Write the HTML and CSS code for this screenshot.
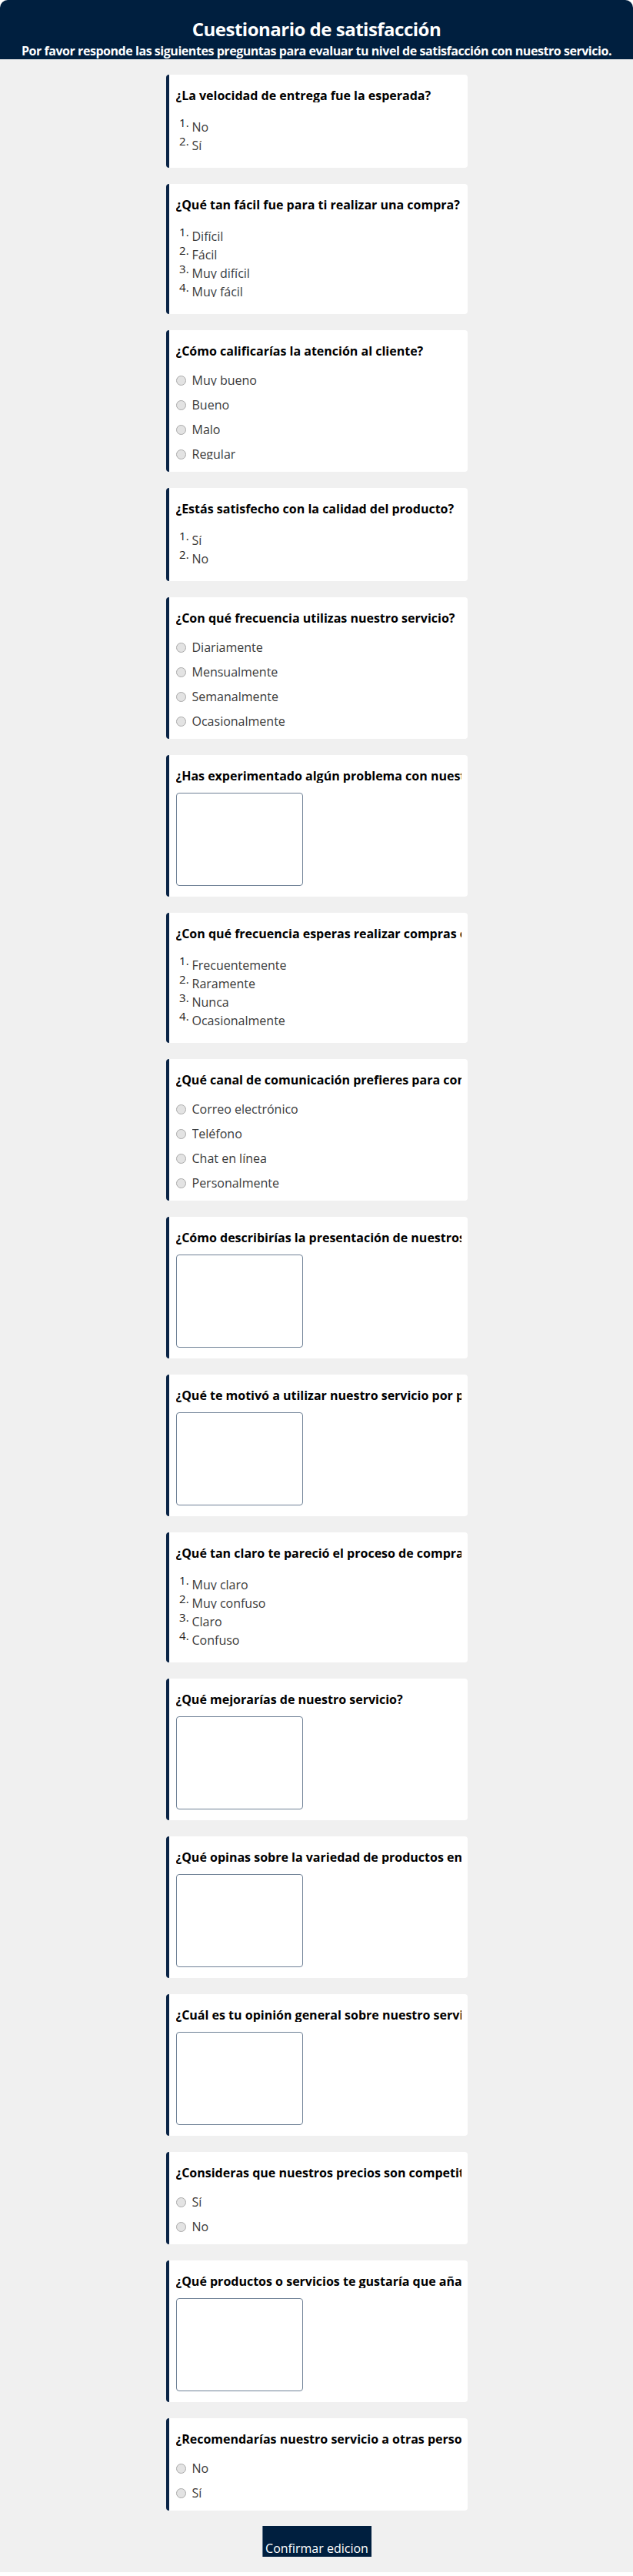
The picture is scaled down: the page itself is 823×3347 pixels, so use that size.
FILE: index.html
```html
<!DOCTYPE html>
<html lang="es">
<head>
<meta charset="utf-8">
<title>Cuestionario de satisfacción</title>
<link rel="stylesheet" href="styles.css">
</head>
<body>
<header class="page-header">
  <h1 class="page-title">Cuestionario de satisfacción</h1>
  <p class="page-subtitle">Por favor responde las siguientes preguntas para evaluar tu nivel de satisfacción con nuestro servicio.</p>
</header>
<main class="survey">
  <div class="cards">
    <section class="card">
      <h2 class="q-title">¿La velocidad de entrega fue la esperada?</h2>
      <ol class="opts-num"><li><span class="opt">No</span></li><li><span class="opt">Sí</span></li></ol>
    </section>
    <section class="card">
      <h2 class="q-title">¿Qué tan fácil fue para ti realizar una compra?</h2>
      <ol class="opts-num"><li><span class="opt">Difícil</span></li><li><span class="opt">Fácil</span></li><li><span class="opt">Muy difícil</span></li><li><span class="opt">Muy fácil</span></li></ol>
    </section>
    <section class="card">
      <h2 class="q-title">¿Cómo calificarías la atención al cliente?</h2>
      <div class="opts-radio">
        <label class="radio-row"><input type="radio" name="q3"><span class="lbl">Muy bueno</span></label>
        <label class="radio-row"><input type="radio" name="q3"><span class="lbl">Bueno</span></label>
        <label class="radio-row"><input type="radio" name="q3"><span class="lbl">Malo</span></label>
        <label class="radio-row"><input type="radio" name="q3"><span class="lbl">Regular</span></label>
      </div>
    </section>
    <section class="card">
      <h2 class="q-title">¿Estás satisfecho con la calidad del producto?</h2>
      <ol class="opts-num"><li><span class="opt">Sí</span></li><li><span class="opt">No</span></li></ol>
    </section>
    <section class="card">
      <h2 class="q-title">¿Con qué frecuencia utilizas nuestro servicio?</h2>
      <div class="opts-radio">
        <label class="radio-row"><input type="radio" name="q5"><span class="lbl">Diariamente</span></label>
        <label class="radio-row"><input type="radio" name="q5"><span class="lbl">Mensualmente</span></label>
        <label class="radio-row"><input type="radio" name="q5"><span class="lbl">Semanalmente</span></label>
        <label class="radio-row"><input type="radio" name="q5"><span class="lbl">Ocasionalmente</span></label>
      </div>
    </section>
    <section class="card">
      <h2 class="q-title">¿Has experimentado algún problema con nuestro servicio?</h2>
      <textarea class="answer"></textarea>
    </section>
    <section class="card">
      <h2 class="q-title">¿Con qué frecuencia esperas realizar compras en el futuro?</h2>
      <ol class="opts-num"><li><span class="opt">Frecuentemente</span></li><li><span class="opt">Raramente</span></li><li><span class="opt">Nunca</span></li><li><span class="opt">Ocasionalmente</span></li></ol>
    </section>
    <section class="card">
      <h2 class="q-title">¿Qué canal de comunicación prefieres para comunicarte con nosotros?</h2>
      <div class="opts-radio">
        <label class="radio-row"><input type="radio" name="q8"><span class="lbl">Correo electrónico</span></label>
        <label class="radio-row"><input type="radio" name="q8"><span class="lbl">Teléfono</span></label>
        <label class="radio-row"><input type="radio" name="q8"><span class="lbl">Chat en línea</span></label>
        <label class="radio-row"><input type="radio" name="q8"><span class="lbl">Personalmente</span></label>
      </div>
    </section>
    <section class="card">
      <h2 class="q-title">¿Cómo describirías la presentación de nuestros productos?</h2>
      <textarea class="answer"></textarea>
    </section>
    <section class="card">
      <h2 class="q-title">¿Qué te motivó a utilizar nuestro servicio por primera vez?</h2>
      <textarea class="answer"></textarea>
    </section>
    <section class="card">
      <h2 class="q-title">¿Qué tan claro te pareció el proceso de compra?</h2>
      <ol class="opts-num"><li><span class="opt">Muy claro</span></li><li><span class="opt">Muy confuso</span></li><li><span class="opt">Claro</span></li><li><span class="opt">Confuso</span></li></ol>
    </section>
    <section class="card">
      <h2 class="q-title">¿Qué mejorarías de nuestro servicio?</h2>
      <textarea class="answer"></textarea>
    </section>
    <section class="card">
      <h2 class="q-title">¿Qué opinas sobre la variedad de productos en nuestra tienda?</h2>
      <textarea class="answer"></textarea>
    </section>
    <section class="card">
      <h2 class="q-title">¿Cuál es tu opinión general sobre nuestro servicio?</h2>
      <textarea class="answer"></textarea>
    </section>
    <section class="card">
      <h2 class="q-title">¿Consideras que nuestros precios son competitivos?</h2>
      <div class="opts-radio">
        <label class="radio-row"><input type="radio" name="q15"><span class="lbl">Sí</span></label>
        <label class="radio-row"><input type="radio" name="q15"><span class="lbl">No</span></label>
      </div>
    </section>
    <section class="card">
      <h2 class="q-title">¿Qué productos o servicios te gustaría que añadiéramos?</h2>
      <textarea class="answer"></textarea>
    </section>
    <section class="card">
      <h2 class="q-title">¿Recomendarías nuestro servicio a otras personas?</h2>
      <div class="opts-radio">
        <label class="radio-row"><input type="radio" name="q17"><span class="lbl">No</span></label>
        <label class="radio-row"><input type="radio" name="q17"><span class="lbl">Sí</span></label>
      </div>
    </section>
  </div>
  <div class="actions">
    <button class="submit" type="button">Confirmar edicion</button>
  </div>
</main>
</body>
</html>
```

FILE: styles.css
```css
* {
  box-sizing: border-box;
}

html,
body {
  margin: 0;
  padding: 0;
}

body {
  background: #ffffff;
  font-family: "Open Sans", "Noto Sans", sans-serif;
  color: #000;
}

.page-header {
  height: 77px;
  background: #001f3f;
  color: #fff;
  border-radius: 10px 10px 0 0;
  text-align: center;
  padding-top: 24px;
  overflow: hidden;
}

.page-title {
  margin: 0;
  font-size: 24px;
  line-height: 28px;
  font-weight: 700;
  letter-spacing: -0.5px;
}

.page-subtitle {
  margin: 4px 0 0;
  font-size: 16px;
  line-height: 20px;
  font-weight: 700;
  white-space: nowrap;
  letter-spacing: -0.45px;
}

.survey {
  background: #f0f0f0;
  padding: 20px 0 20px;
}

.cards {
  display: flex;
  flex-direction: column;
  align-items: center;
  gap: 21px;
}

.card {
  width: 392px;
  background: #fff;
  border-left: 4px solid #0a2446;
  border-radius: 4px;
  padding: 17px 8px 0 9px;
}

.q-title {
  margin: 0;
  font-size: 16px;
  font-weight: 700;
  line-height: 20px;
  height: 19px;
  overflow: hidden;
  white-space: nowrap;
  letter-spacing: 0;
}

.opts-num {
  margin: 18px 0 0;
  padding: 0 0 19px 21px;
  list-style: decimal;
}

.opts-num li {
  height: 24px;
  font-size: 15px;
  line-height: 16px;
  color: #222;
}

.opts-num .opt {
  display: inline-block;
  vertical-align: top;
  padding-top: 6px;
  height: 21px;
  overflow: hidden;
  font-size: 16px;
  line-height: 16px;
  color: #3a3a3a;
}

.opts-radio {
  margin-top: 14px;
  padding-bottom: 6px;
}

.radio-row {
  display: flex;
  align-items: flex-start;
  gap: 8px;
  height: 32px;
}

.radio-row input {
  appearance: none;
  -webkit-appearance: none;
  flex: none;
  width: 13px;
  height: 13px;
  margin: 9px 0 0 0;
  border: 1px solid #a9a9a9;
  border-radius: 50%;
  background: #e3e3e3;
}

.radio-row .lbl {
  padding-top: 7px;
  height: 22px;
  overflow: hidden;
  font-size: 16px;
  line-height: 16px;
  color: #3a3a3a;
}

.answer {
  display: block;
  width: 165px;
  height: 121px;
  margin: 13px 0 14px 0;
  border: 1px solid #6f8196;
  border-radius: 4px;
  resize: none;
  background: #fff;
}

.actions {
  display: flex;
  justify-content: center;
  padding-top: 20px;
}

.submit {
  width: 142px;
  height: 40px;
  background: #001f3f;
  color: #fff;
  border: none;
  border-left: 1px solid #5a6f85;
  font-family: inherit;
  font-size: 16px;
  line-height: 20px;
  padding: 18px 0 0;
}
```
